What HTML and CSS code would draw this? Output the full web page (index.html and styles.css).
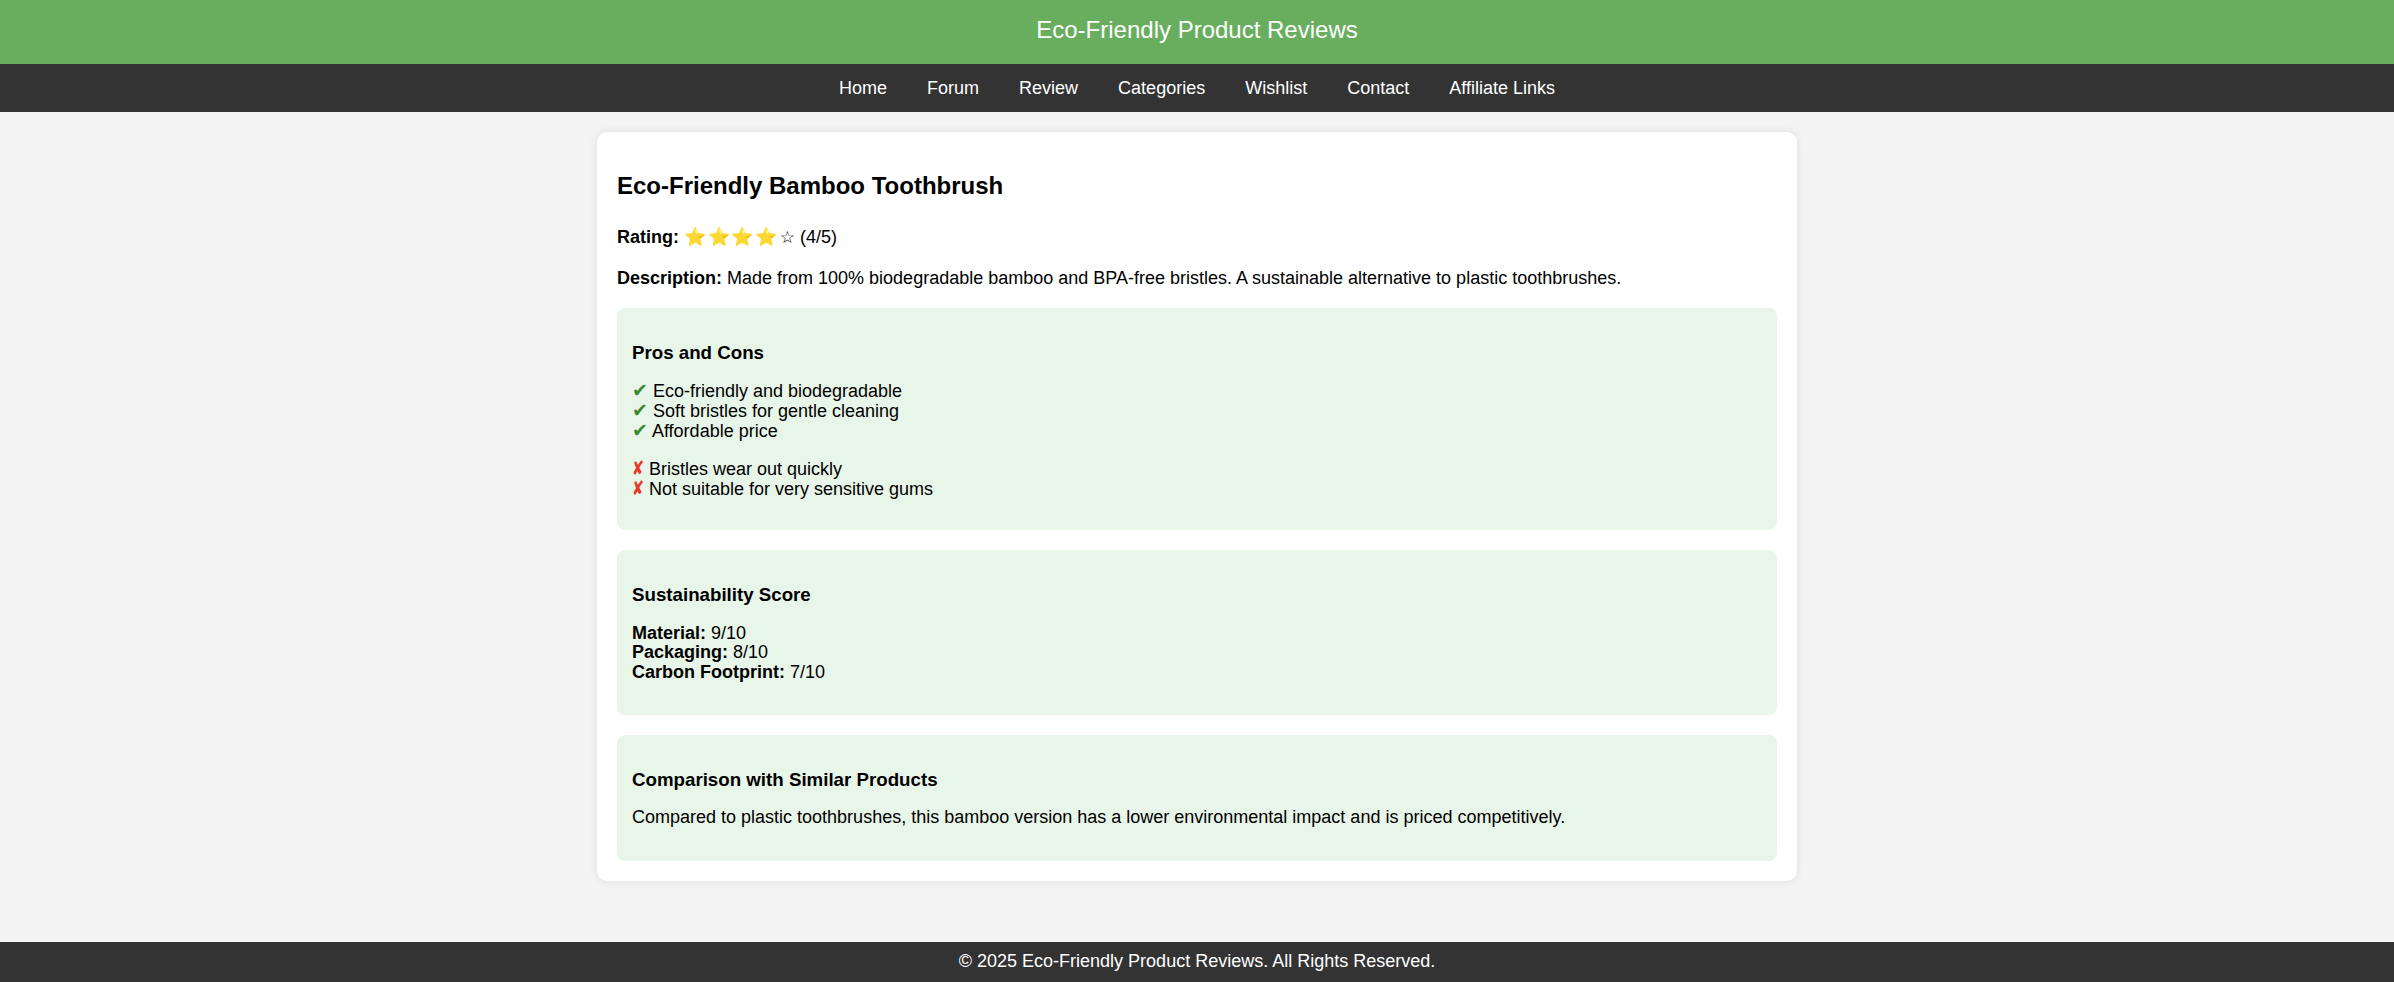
FILE: index.html
```html
<!DOCTYPE html>
<html lang="en">
<head>
<meta charset="utf-8">
<title>Eco-Friendly Product Reviews</title>
<link rel="stylesheet" href="styles.css">
</head>
<body>
<header class="site-header">
  <h1 class="site-title">Eco-Friendly Product Reviews</h1>
</header>
<nav class="site-nav">
  <a href="#">Home</a>
  <a href="#">Forum</a>
  <a href="#">Review</a>
  <a href="#">Categories</a>
  <a href="#">Wishlist</a>
  <a href="#">Contact</a>
  <a href="#">Affiliate Links</a>
</nav>
<main class="container">
  <article class="card">
    <h2 class="product-title">Eco-Friendly Bamboo Toothbrush</h2>
    <p class="rating"><strong>Rating:</strong> <span class="stars">⭐⭐⭐⭐</span><span class="empty-star">☆</span> (4/5)</p>
    <p><strong>Description:</strong> Made from 100% biodegradable bamboo and BPA-free bristles. A sustainable alternative to plastic toothbrushes.</p>

    <section class="panel">
      <h3>Pros and Cons</h3>
      <ul class="checklist">
        <li><span class="ok">✔</span> Eco-friendly and biodegradable</li>
        <li><span class="ok">✔</span> Soft bristles for gentle cleaning</li>
        <li><span class="ok">✔</span> Affordable price</li>
      </ul>
      <ul class="checklist">
        <li><span class="no">✘</span> Bristles wear out quickly</li>
        <li><span class="no">✘</span> Not suitable for very sensitive gums</li>
      </ul>
    </section>

    <section class="panel">
      <h3>Sustainability Score</h3>
      <p><strong>Material:</strong> 9/10<br><strong>Packaging:</strong> 8/10<br><strong>Carbon Footprint:</strong> 7/10</p>
    </section>

    <section class="panel">
      <h3>Comparison with Similar Products</h3>
      <p>Compared to plastic toothbrushes, this bamboo version has a lower environmental impact and is priced competitively.</p>
    </section>
  </article>
</main>
<footer class="site-footer">
  <p>© 2025 Eco-Friendly Product Reviews. All Rights Reserved.</p>
</footer>
</body>
</html>
```
FILE: styles.css
```css
html, body {
  margin: 0;
  padding: 0;
}

body {
  font-family: "Liberation Sans", Arial, Helvetica, sans-serif;
  font-size: 18px;
  color: #000;
  background: #f4f4f4;
  min-height: 100vh;
  display: flex;
  flex-direction: column;
}

.site-header {
  background: #68ae5e;
  color: #fff;
  text-align: center;
  height: 64px;
  box-sizing: border-box;
  padding-top: 16px;
}

.site-title {
  margin: 0;
  font-size: 24px;
  font-weight: normal;
  line-height: normal;
}

.site-nav {
  background: #333;
  height: 48px;
  display: flex;
  justify-content: center;
  align-items: center;
  gap: 40px;
}

.site-nav a {
  color: #fff;
  text-decoration: none;
  font-size: 18px;
}

.container {
  width: 1200px;
  margin: 20px auto 0;
}

.card {
  background: #fff;
  border-radius: 10px;
  padding: 20px;
  box-shadow: 0 0 10px rgba(0, 0, 0, 0.1);
}

.card p {
  margin: 18px 0;
  line-height: 19.4px;
}

.product-title {
  font-size: 24px;
  margin: 20px 0;
  line-height: 27.5px;
}

.card .rating {
  line-height: 28px;
  padding-top: 3px;
}

.rating .stars {
  font-family: "Noto Color Emoji", "Apple Color Emoji", sans-serif;
  letter-spacing: 1.5px;
  line-height: 1;
}

.rating .empty-star {
  font-family: "DejaVu Sans", sans-serif;
  font-size: 17px;
  line-height: 1;
}

.panel {
  background: #e8f5e9;
  border-radius: 8px;
  padding: 15px;
  margin-top: 20px;
}

.panel h3 {
  font-size: 18.72px;
  margin: 18.72px 0;
  line-height: 21px;
}

.checklist {
  list-style: none;
  margin: 18px 0;
  padding: 0;
}

.checklist li {
  height: 19.6px;
  line-height: 19.6px;
  white-space: nowrap;
}

.ok, .no {
  font-family: "DejaVu Sans", sans-serif;
  line-height: 1;
}

.ok {
  color: #3b8a2e;
  font-size: 19px;
}

.no {
  color: #e5392d;
  font-size: 20px;
  display: inline-block;
  width: 12px;
  transform: scaleX(0.72);
  transform-origin: left center;
}

.site-footer {
  margin-top: auto;
  background: #333;
  color: #fff;
  text-align: center;
  height: 40px;
  box-sizing: border-box;
  padding-top: 10px;
}

.site-footer p {
  margin: 0;
  line-height: 19.5px;
}
```
